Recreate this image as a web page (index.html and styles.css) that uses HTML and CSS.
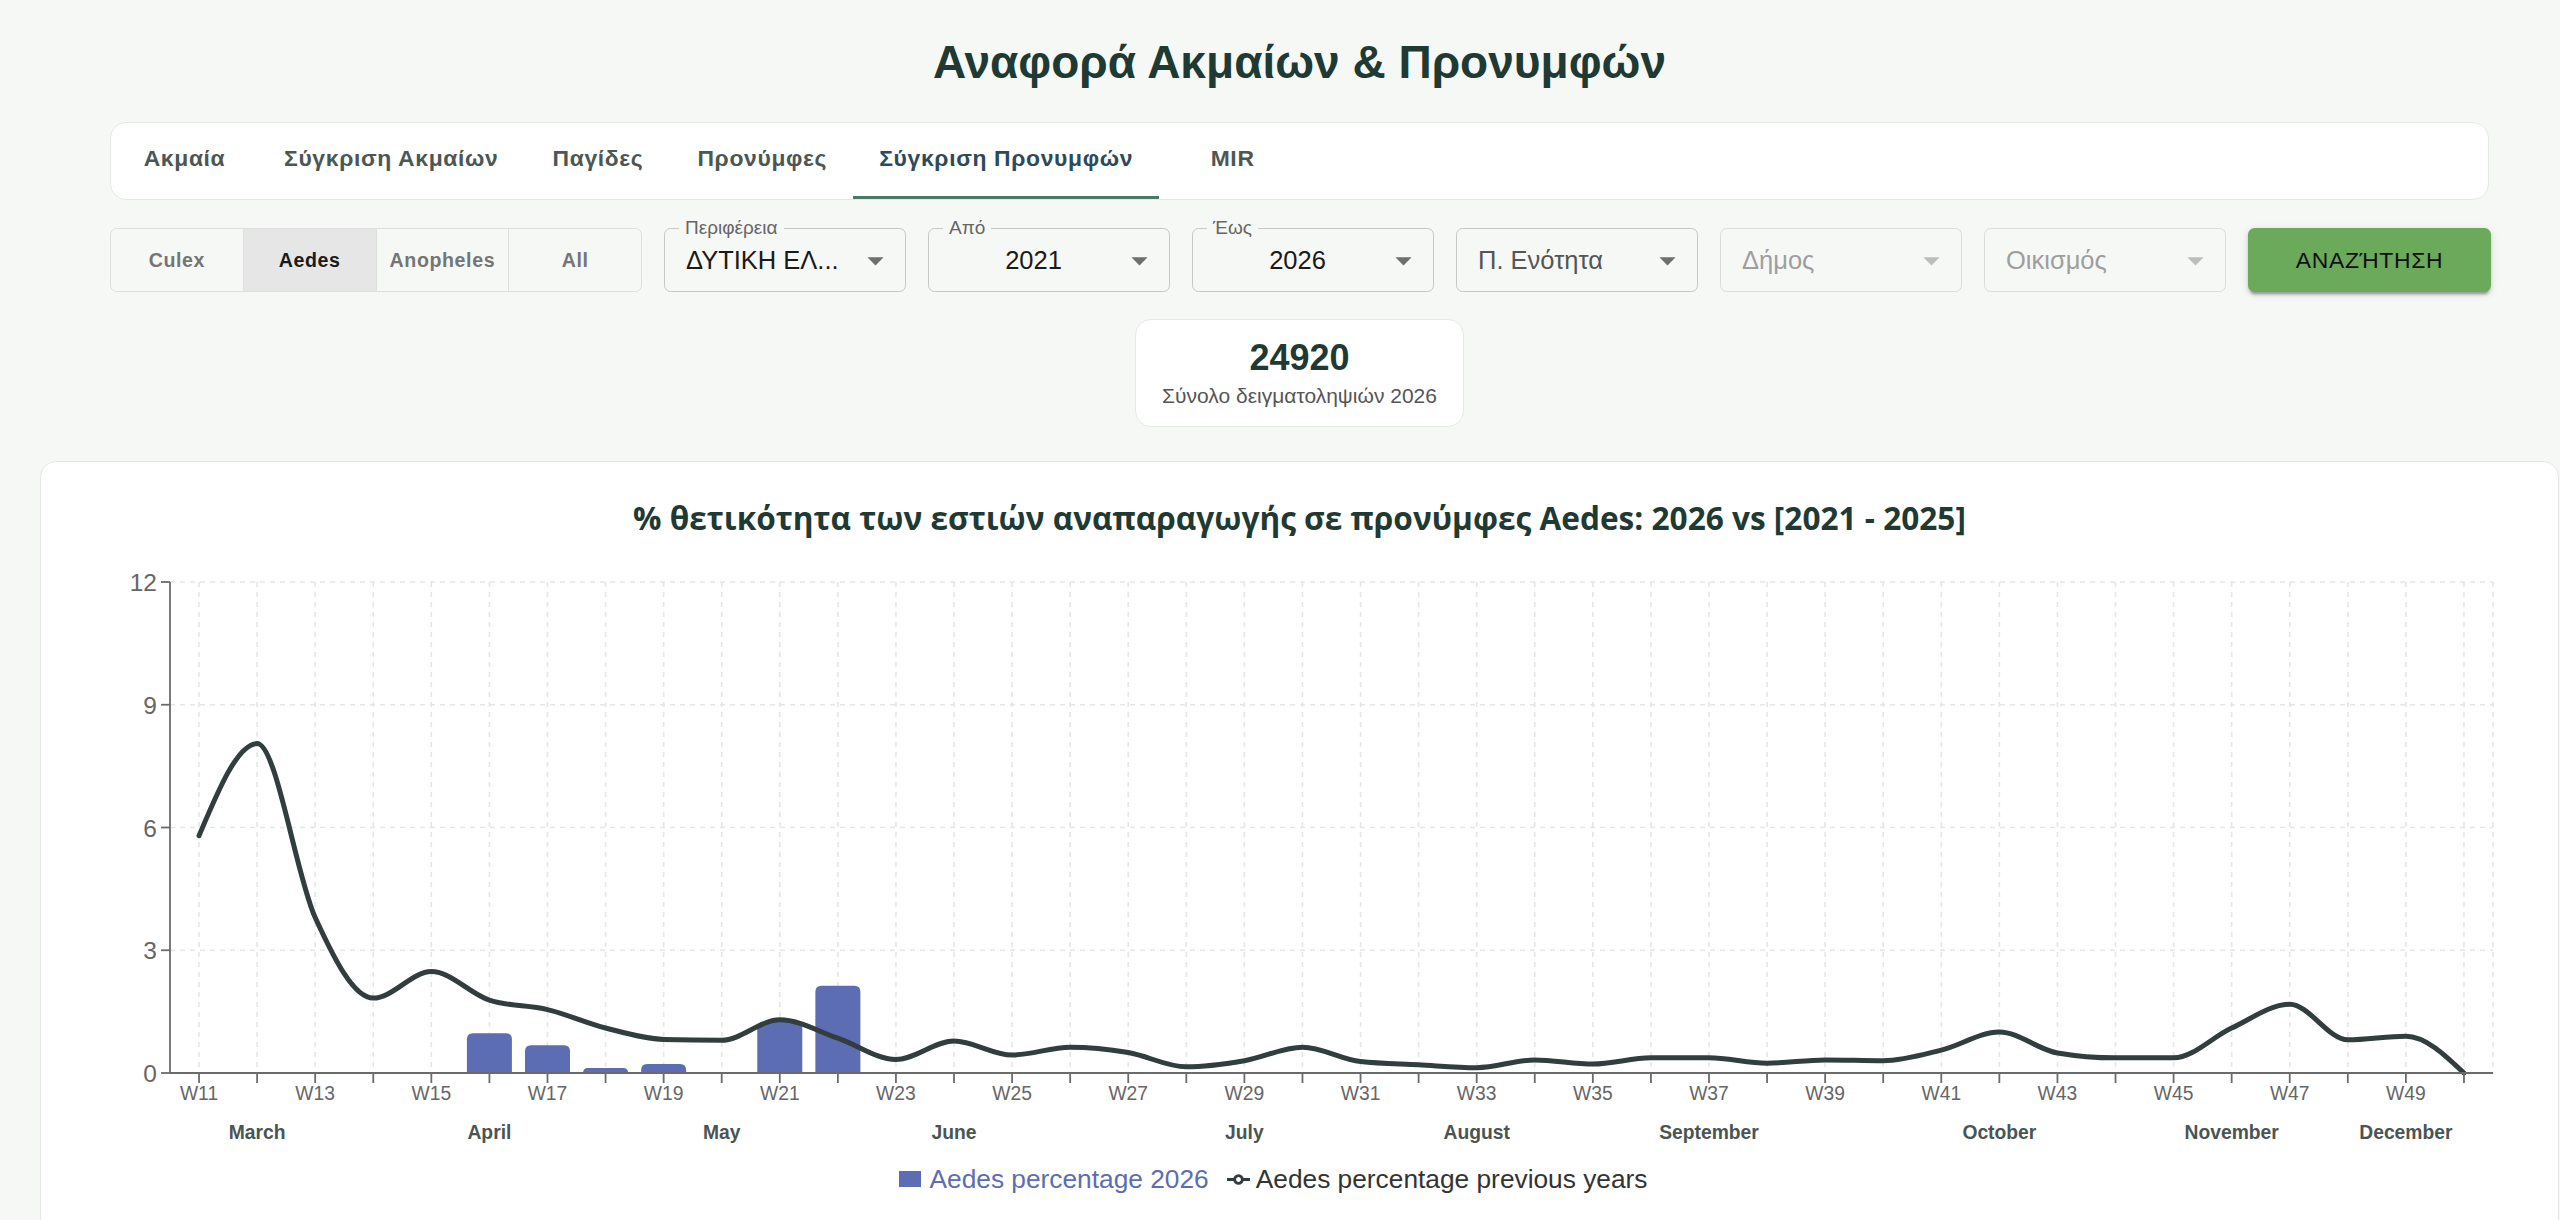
FILE: index.html
```html
<!DOCTYPE html>
<html lang="el">
<head>
<meta charset="utf-8">
<title>Αναφορά Ακμαίων & Προνυμφών</title>
<link rel="stylesheet" href="styles.css">
</head>
<body>
<div class="page">
  <h1 class="page-title">Αναφορά Ακμαίων &amp; Προνυμφών</h1>
  <div class="container">
    <nav class="tabs-card">
      <div class="tab">Ακμαία</div>
      <div class="tab">Σύγκριση Ακμαίων</div>
      <div class="tab">Παγίδες</div>
      <div class="tab">Προνύμφες</div>
      <div class="tab active">Σύγκριση Προνυμφών</div>
      <div class="tab">MIR</div>
    </nav>

    <div class="filters">
      <div class="toggle-group">
        <div class="toggle">Culex</div>
        <div class="toggle selected">Aedes</div>
        <div class="toggle">Anopheles</div>
        <div class="toggle">All</div>
      </div>
      <div class="select">
        <span class="select-label">Περιφέρεια</span>
        <span class="select-value">ΔΥΤΙΚΗ ΕΛ...</span>
        <svg class="arrow" viewBox="0 0 24 24"><path d="M7 10l5 5 5-5z"/></svg>
      </div>
      <div class="select">
        <span class="select-label">Από</span>
        <span class="select-value centered">2021</span>
        <svg class="arrow" viewBox="0 0 24 24"><path d="M7 10l5 5 5-5z"/></svg>
      </div>
      <div class="select">
        <span class="select-label">Έως</span>
        <span class="select-value centered">2026</span>
        <svg class="arrow" viewBox="0 0 24 24"><path d="M7 10l5 5 5-5z"/></svg>
      </div>
      <div class="select">
        <span class="select-value placeholder">Π. Ενότητα</span>
        <svg class="arrow" viewBox="0 0 24 24"><path d="M7 10l5 5 5-5z"/></svg>
      </div>
      <div class="select disabled">
        <span class="select-value placeholder">Δήμος</span>
        <svg class="arrow" viewBox="0 0 24 24"><path d="M7 10l5 5 5-5z"/></svg>
      </div>
      <div class="select disabled">
        <span class="select-value placeholder">Οικισμός</span>
        <svg class="arrow" viewBox="0 0 24 24"><path d="M7 10l5 5 5-5z"/></svg>
      </div>
      <button class="search-btn">ΑΝΑΖΉΤΗΣΗ</button>
    </div>

    <div class="stat-card">
      <div class="stat-number">24920</div>
      <div class="stat-label">Σύνολο δειγματοληψιών 2026</div>
    </div>
  </div>

  <section class="chart-card">
    <h2 class="chart-title">% θετικότητα των εστιών αναπαραγωγής σε προνύμφες Aedes: 2026 vs [2021 - 2025]</h2>
    <svg id="chart" class="chart" width="2517" height="622" viewBox="0 0 2517 622"></svg>
    <div class="legend">
      <div class="legend-item bars">
        <span class="legend-square"></span>
        <span>Aedes percentage 2026</span>
      </div>
      <div class="legend-item line">
        <svg class="legend-line" viewBox="0 0 32 32"><path d="M0,16h10.67A5.33,5.33,0,1,1,21.33,16H32M21.33,16A5.33,5.33,0,1,1,10.67,16"/></svg>
        <span>Aedes percentage previous years</span>
      </div>
    </div>
  </section>
</div>
<script src="script.js"></script>
</body>
</html>
```

FILE: styles.css
```css
html, body {
  margin: 0;
  padding: 0;
  overflow: hidden;
  background: #f6f8f6;
}

body {
  font-family: "Liberation Sans", Arial, sans-serif;
  color: #1a1a1a;
}

.page {
  width: 2599px;
}

.page-title {
  margin: 34px 0 0;
  text-align: center;
  font-size: 46px;
  line-height: 56px;
  font-weight: 700;
  color: #1f3a33;
}

.container {
  margin: 0 110px;
}

/* Tabs */
.tabs-card {
  margin-top: 32px;
  height: 78px;
  box-sizing: border-box;
  background: #fff;
  border: 1px solid #e5e9e5;
  border-radius: 16px;
  display: flex;
}

.tab {
  position: relative;
  min-width: 147px;
  padding: 0 26px 6px;
  box-sizing: border-box;
  height: 76px;
  display: flex;
  align-items: center;
  justify-content: center;
  font-size: 22.9px;
  font-weight: 700;
  letter-spacing: 0.65px;
  color: #4b5754;
  white-space: nowrap;
}

.tab.active {
  color: #2d4a5b;
}

.tab.active::after {
  content: "";
  position: absolute;
  left: 0;
  right: 0;
  bottom: 0;
  height: 3.3px;
  background: #4a7a68;
}

/* Filters */
.filters {
  margin-top: 28px;
  height: 64px;
  display: flex;
  gap: 22px;
}

.toggle-group {
  width: 532px;
  flex: none;
  display: flex;
  box-sizing: border-box;
  border: 1.5px solid #dedede;
  border-radius: 6.5px;
  overflow: hidden;
}

.toggle {
  flex: 1;
  display: flex;
  align-items: center;
  justify-content: center;
  font-size: 19.6px;
  font-weight: 700;
  letter-spacing: 0.6px;
  color: #757575;
}

.toggle + .toggle {
  border-left: 1.5px solid #dedede;
}

.toggle.selected {
  background: #e6e6e6;
  color: #1a1a1a;
}

.select {
  position: relative;
  width: 242px;
  flex: none;
  height: 64px;
  box-sizing: border-box;
  border: 1.6px solid #c6c8c6;
  border-radius: 6.5px;
  display: flex;
  align-items: center;
  padding: 0 52px 0 21px;
}

.select.disabled {
  border-color: #dadcda;
}

.select-label {
  position: absolute;
  top: -12px;
  left: 14px;
  padding: 0 6px;
  background: #f6f8f6;
  font-size: 19px;
  line-height: 22px;
  color: #666;
}

.select-value {
  flex: 1;
  font-size: 25.5px;
  line-height: 30px;
  color: #1a1a1a;
  white-space: nowrap;
  overflow: hidden;
}

.select-value.centered {
  text-align: center;
}

.select-value.placeholder {
  color: #555;
}

.select.disabled .select-value {
  color: #9e9e9e;
}

.arrow {
  position: absolute;
  right: 10px;
  top: 12px;
  width: 39px;
  height: 39px;
  fill: #6f6f6f;
}

.select.disabled .arrow {
  fill: #bdbdbd;
}

.search-btn {
  width: 243px;
  flex: none;
  height: 64px;
  border: none;
  border-radius: 6.5px;
  background: #6aaa5a;
  color: #111;
  font-family: "Liberation Sans", Arial, sans-serif;
  font-size: 22.9px;
  letter-spacing: 0.65px;
  box-shadow: 0 5px 2px -3px rgba(0, 0, 0, 0.2), 0 3px 3px 0 rgba(0, 0, 0, 0.14), 0 2px 8px 0 rgba(0, 0, 0, 0.12);
}

/* Stat card */
.stat-card {
  margin: 27px auto 0;
  width: 329px;
  height: 108px;
  box-sizing: border-box;
  padding-top: 18px;
  background: #fff;
  border: 1px solid #e6e9e6;
  border-radius: 16px;
  text-align: center;
}

.stat-number {
  font-size: 36px;
  line-height: 40px;
  font-weight: 700;
  color: #1f3a33;
}

.stat-label {
  margin-top: 5px;
  font-size: 21px;
  line-height: 26px;
  color: #555;
}

/* Chart card */
.chart-card {
  margin: 34px 40px 0;
  height: 820px;
  box-sizing: border-box;
  padding-top: 36px;
  background: #fff;
  border: 1px solid #e5e9e5;
  border-radius: 16px;
}

.chart-title {
  margin: 0;
  text-align: center;
  font-family: "Open Sans", "Noto Sans", sans-serif;
  font-size: 31.6px;
  line-height: 40px;
  font-weight: 700;
  color: #1f3a33;
}

.chart {
  display: block;
}

.chart .grid line {
  stroke: #e3e7e7;
  stroke-width: 1.6;
  stroke-dasharray: 5 5;
}

.chart .axis line {
  stroke: #6b6b6b;
  stroke-width: 1.8;
}

.chart .ytick {
  font-family: "Liberation Sans", Arial, sans-serif;
  font-size: 24.5px;
  fill: #666;
}

.chart .xtick {
  font-family: "Liberation Sans", Arial, sans-serif;
  font-size: 19.3px;
  fill: #666;
}

.chart .month {
  font-family: "Liberation Sans", Arial, sans-serif;
  font-size: 19.3px;
  font-weight: 700;
  fill: #4a5553;
}

.chart .bar {
  fill: #5c6db4;
}

.chart .series-line {
  fill: none;
  stroke: #323d3d;
  stroke-width: 5;
  stroke-linejoin: round;
  stroke-linecap: round;
}

.legend {
  margin-top: 4px;
  height: 30px;
  padding-right: 52px;
  display: flex;
  justify-content: center;
  align-items: center;
  gap: 18px;
  font-size: 26.3px;
}

.legend-item {
  display: flex;
  align-items: center;
}

.legend-item.bars {
  gap: 8px;
  color: #5c6db4;
}

.legend-item.line {
  gap: 6px;
  color: #333;
}

.legend-square {
  width: 22px;
  height: 16px;
  background: #5c6db4;
}

.legend-line {
  width: 23px;
  height: 23px;
  fill: none;
  stroke: #323d3d;
  stroke-width: 4;
}
```

FILE: script.js
```js
(function () {
  var NS = 'http://www.w3.org/2000/svg';
  var svg = document.getElementById('chart');
  var L = 129, R = 2452, N = 40;
  var band = (R - L) / N;
  var Y0 = 535, TOP = 44;
  var k = (Y0 - TOP) / 12;

  function cx(i) { return L + band * (i + 0.5); }
  function Y(v) { return Y0 - v * k; }
  function el(tag, attrs, parent, text) {
    var e = document.createElementNS(NS, tag);
    for (var a in attrs) e.setAttribute(a, attrs[a]);
    if (text !== undefined) e.textContent = text;
    (parent || svg).appendChild(e);
    return e;
  }

  var line = [5.8, 8.05, 3.8, 1.83, 2.48, 1.78, 1.55, 1.1, 0.82, 0.8,
    1.3, 0.85, 0.33, 0.78, 0.44, 0.63, 0.5, 0.15, 0.3, 0.63,
    0.28, 0.2, 0.13, 0.32, 0.22, 0.37, 0.37, 0.24, 0.32, 0.3,
    0.56, 1.0, 0.49, 0.37, 0.37, 1.1, 1.68, 0.81, 0.9, 0];
  var bars = { 5: 0.97, 6: 0.68, 7: 0.12, 8: 0.22, 10: 1.25, 11: 2.13 };
  var months = { 1: 'March', 5: 'April', 9: 'May', 13: 'June', 18: 'July',
    22: 'August', 26: 'September', 31: 'October', 35: 'November', 38: 'December' };

  // grid
  var grid = el('g', { 'class': 'grid' });
  [3, 6, 9, 12].forEach(function (v) {
    el('line', { x1: L, x2: R, y1: Y(v), y2: Y(v) }, grid);
  });
  for (var i = 0; i < N; i++) {
    el('line', { x1: cx(i), x2: cx(i), y1: TOP, y2: Y0 }, grid);
  }
  el('line', { x1: R, x2: R, y1: TOP, y2: Y0 }, grid);

  // bars
  var bw = 45;
  Object.keys(bars).forEach(function (key) {
    var i = +key, v = bars[key];
    var x = cx(i) - bw / 2, y = Y(v), h = Y0 - y;
    var r = Math.min(6, h);
    var d = 'M' + x + ',' + Y0 + 'V' + (y + r) + 'Q' + x + ',' + y + ' ' + (x + r) + ',' + y +
      'H' + (x + bw - r) + 'Q' + (x + bw) + ',' + y + ' ' + (x + bw) + ',' + (y + r) + 'V' + Y0 + 'Z';
    el('path', { d: d, 'class': 'bar' });
  });

  // monotone X line
  var xs = [], ys = [];
  for (var j = 0; j < N; j++) { xs.push(cx(j)); ys.push(Y(line[j])); }
  function sign(x) { return x < 0 ? -1 : 1; }
  var m = new Array(N);
  for (var j = 1; j < N - 1; j++) {
    var h0 = xs[j] - xs[j - 1], h1 = xs[j + 1] - xs[j];
    var s0 = (ys[j] - ys[j - 1]) / h0, s1 = (ys[j + 1] - ys[j]) / h1;
    var p = (s0 * h1 + s1 * h0) / (h0 + h1);
    m[j] = (sign(s0) + sign(s1)) * Math.min(Math.abs(s0), Math.abs(s1), 0.5 * Math.abs(p)) || 0;
  }
  var hA = xs[1] - xs[0];
  m[0] = (3 * (ys[1] - ys[0]) / hA - m[1]) / 2;
  var hB = xs[N - 1] - xs[N - 2];
  m[N - 1] = (3 * (ys[N - 1] - ys[N - 2]) / hB - m[N - 2]) / 2;
  var d = 'M' + xs[0].toFixed(2) + ',' + ys[0].toFixed(2);
  for (var j = 0; j < N - 1; j++) {
    var dx = (xs[j + 1] - xs[j]) / 3;
    d += 'C' + (xs[j] + dx).toFixed(2) + ',' + (ys[j] + dx * m[j]).toFixed(2) + ' ' +
      (xs[j + 1] - dx).toFixed(2) + ',' + (ys[j + 1] - dx * m[j + 1]).toFixed(2) + ' ' +
      xs[j + 1].toFixed(2) + ',' + ys[j + 1].toFixed(2);
  }
  el('path', { d: d, 'class': 'series-line' });

  // axes
  var axis = el('g', { 'class': 'axis' });
  el('line', { x1: L, x2: L, y1: TOP, y2: Y0 }, axis);
  el('line', { x1: L, x2: R, y1: Y0, y2: Y0 }, axis);
  [0, 3, 6, 9, 12].forEach(function (v) {
    el('line', { x1: L - 9, x2: L, y1: Y(v), y2: Y(v) }, axis);
    el('text', { x: L - 13, y: Y(v) + 9, 'text-anchor': 'end', 'class': 'ytick' }, svg, String(v));
  });
  for (var i = 0; i < N; i++) {
    el('line', { x1: cx(i), x2: cx(i), y1: Y0, y2: Y0 + 10 }, axis);
    if (i % 2 === 0) {
      el('text', { x: cx(i), y: 562, 'text-anchor': 'middle', 'class': 'xtick' }, svg, 'W' + (11 + i));
    }
    if (months[i]) {
      el('text', { x: cx(i), y: 601, 'text-anchor': 'middle', 'class': 'month' }, svg, months[i]);
    }
  }
})();
```
